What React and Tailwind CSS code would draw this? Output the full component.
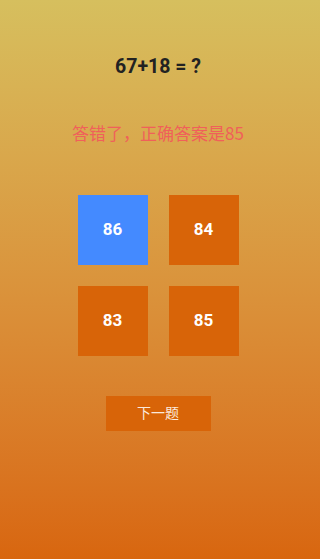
import React from "react";

const OPTIONS = [
    { value: 86, picked: true },
    { value: 84 },
    { value: 83 },
    { value: 85 },
];

export default function App() {
    return (
        <div
            className="w-[320px] h-[559px] pr-[4px] flex flex-col items-center bg-gradient-to-b from-[#d6bf5e] to-[#d8660f]"
            style={{ fontFamily: "Roboto, 'Noto Sans CJK SC', sans-serif" }}
        >
            <div className="mt-[54px] h-[26px] leading-[26px] text-[19.5px] font-bold text-[#222]">67+18 = ?</div>
            <div
                className="mt-[41px] h-[24px] leading-[24px] text-[17px] text-[#f0605a]"
                style={{ fontFamily: "'Noto Sans CJK SC', sans-serif" }}
            >
                答错了，正确答案是85
            </div>
            <div className="mt-[50px] grid grid-cols-2 gap-[21px]">
                {OPTIONS.map((o) => (
                    <div
                        key={o.value}
                        className={`w-[70px] h-[70px] flex items-center justify-center text-[17px] font-bold text-white ${o.picked ? "bg-[#448aff]" : "bg-[#d86408]"}`}
                    >
                        {o.value}
                    </div>
                ))}
            </div>
            <button className="mt-[40px] w-[105px] h-[35px] bg-[#d86408] text-[14px] text-[#fbe9dc]">下一题</button>
        </div>
    );
}
